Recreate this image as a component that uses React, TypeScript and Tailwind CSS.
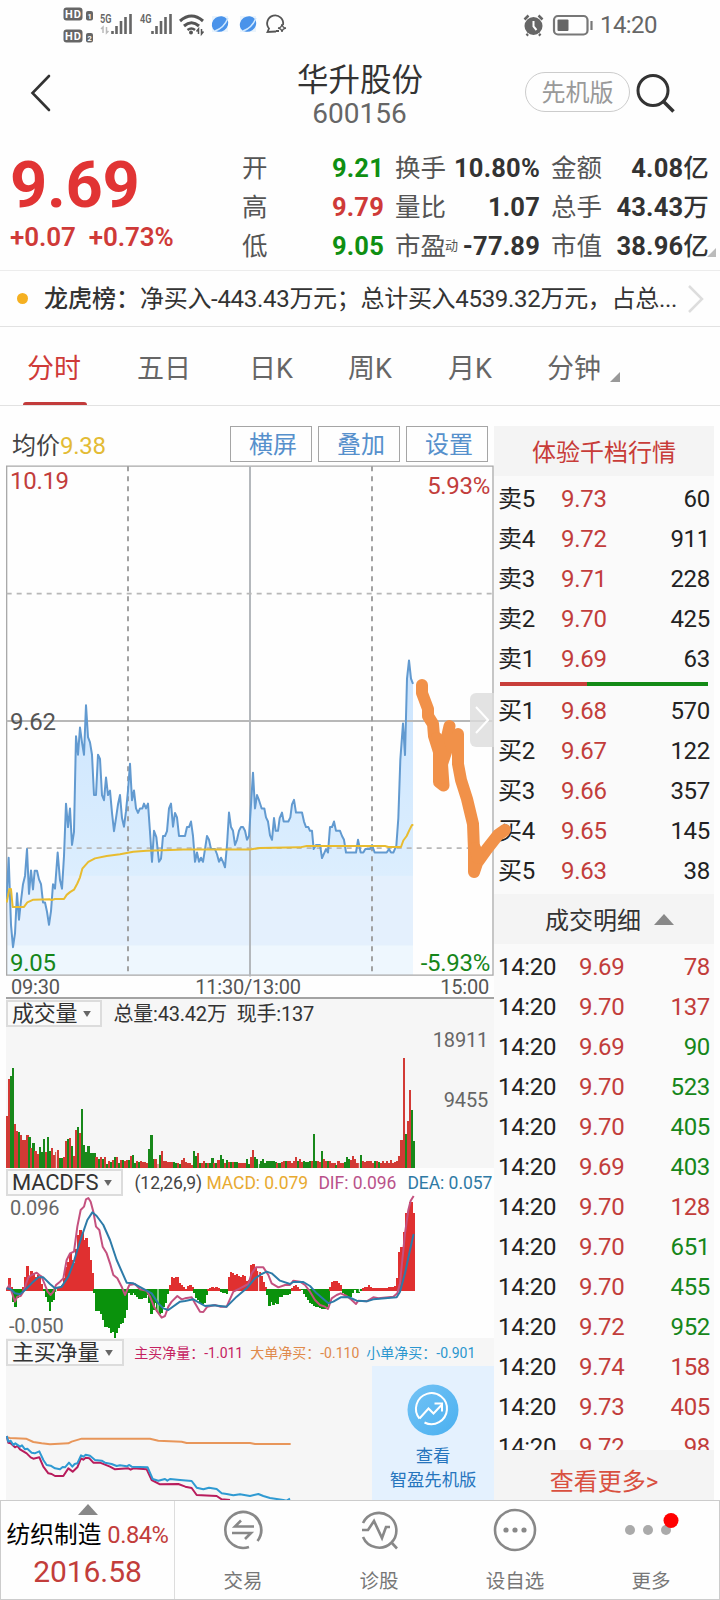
import type { ReactNode } from 'react'

const stats = [
  { label: '开', value: '9.21', color: 'text-[#0f8f12]' },
  { label: '换手', value: '10.80%', color: 'text-[#333]' },
  { label: '金额', value: '4.08亿', color: 'text-[#333]' },
  { label: '高', value: '9.79', color: 'text-[#cf3a38]' },
  { label: '量比', value: '1.07', color: 'text-[#333]' },
  { label: '总手', value: '43.43万', color: 'text-[#333]' },
  { label: '低', value: '9.05', color: 'text-[#0f8f12]' },
  { label: '市盈', note: '动', value: '-77.89', color: 'text-[#333]' },
  { label: '市值', value: '38.96亿', color: 'text-[#333]' },
]

const sells = [
  { name: '卖5', price: '9.73', amount: 60 },
  { name: '卖4', price: '9.72', amount: 911 },
  { name: '卖3', price: '9.71', amount: 228 },
  { name: '卖2', price: '9.70', amount: 425 },
  { name: '卖1', price: '9.69', amount: 63 },
]

const buys = [
  { name: '买1', price: '9.68', amount: 570 },
  { name: '买2', price: '9.67', amount: 122 },
  { name: '买3', price: '9.66', amount: 357 },
  { name: '买4', price: '9.65', amount: 145 },
  { name: '买5', price: '9.63', amount: 38 },
]

const trades = [
  { price: '9.69', amount: 78, up: true },
  { price: '9.70', amount: 137, up: true },
  { price: '9.69', amount: 90, up: false },
  { price: '9.70', amount: 523, up: false },
  { price: '9.70', amount: 405, up: false },
  { price: '9.69', amount: 403, up: false },
  { price: '9.70', amount: 128, up: true },
  { price: '9.70', amount: 651, up: false },
  { price: '9.70', amount: 455, up: false },
  { price: '9.72', amount: 952, up: false },
  { price: '9.74', amount: 158, up: true },
  { price: '9.73', amount: 405, up: true },
  { price: '9.72', amount: 98, up: true },
]

// chart units: x runs 18..1482 over the trading day, one minute is 6.1
const priceLine =
  '20,1275 26,1155 33,1350 39,1415 45,1375 51,1258 57,1335 63,1280 69,1232 75,1208 81,1130 87,1260 93,1192 99,1247 104,1193 111,1193 117,1218 123,1232 129,1285 135,1285 141,1312 147,1350 153,1310 159,1232 165,1245 173,1140 180,1220 186,1245 192,1150 198,998 204,1066 210,1012 216,1118 222,1080 228,802 234,856 240,777 246,820 252,856 258,712 264,805 270,820 276,856 282,973 288,973 294,856 300,868 306,973 312,988 318,922 324,973 330,960 336,1025 342,1078 348,1040 354,1000 360,973 366,1040 372,1065 378,1020 384,960 390,882 396,988 402,960 408,1012 414,1025 420,1012 427,1012 432,998 438,1012 444,998 450,1080 456,1167 462,1077 469,1095 477,1167 483,1158 489,1092 495,1092 501,1078 507,1012 513,998 519,1065 525,1025 531,1038 537,1092 555,1092 561,1066 567,1066 573,1050 579,1092 585,1167 591,1140 597,1167 603,1155 609,1167 615,1130 621,1092 627,1103 633,1130 645,1130 651,1145 657,1167 663,1155 669,1167 675,1183 681,1118 687,1024 693,1066 699,1077 705,1118 711,1103 717,1077 723,1066 729,1066 735,1077 741,1103 747,1092 753,1000 759,908 765,1012 771,973 777,988 785,1012 793,1012 798,1038 804,1050 810,1090 816,1103 822,1040 827,1077 834,1077 839,1040 846,1024 851,1050 865,1050 871,1038 876,1000 882,987 888,1024 906,1024 912,1050 918,1066 925,1066 930,1077 936,1077 941,1130 948,1118 960,1118 966,1156 978,1130 984,1140 990,1066 996,1066 1002,1050 1008,1077 1020,1077 1026,1092 1032,1103 1038,1140 1068,1140 1074,1103 1082,1140 1090,1140 1096,1130 1110,1130 1116,1118 1124,1140 1160,1140 1167,1130 1173,1140 1180,1140 1189,1120 1195,1040 1201,870 1209,765 1215,857 1221,635 1227,582 1233,635 1239,650'

const averageLine =
  '20,1285 28,1246 33,1246 38,1298 72,1298 82,1285 100,1277 150,1276 155,1278 165,1275 192,1275 200,1263 210,1255 222,1248 232,1230 240,1212 247,1187 265,1167 285,1157 320,1150 360,1145 400,1138 440,1135 510,1133 550,1131 750,1131 780,1127 900,1125 920,1121 1155,1121 1165,1124 1203,1124 1210,1105 1220,1092 1228,1075 1236,1060 1240,1060'

const difLine =
  '20,388 28,375 38,405 45,425 52,410 62,408 70,395 85,352 95,345 110,338 118,345 125,350 135,375 143,395 152,405 160,395 168,375 180,365 190,355 200,300 210,280 222,275 232,200 242,150 252,140 258,118 265,114 272,125 280,155 288,200 298,210 308,260 320,280 330,310 340,345 352,355 365,380 375,405 388,375 405,372 420,388 440,392 450,410 462,440 472,455 485,473 495,468 505,440 515,425 532,408 545,418 555,415 575,412 585,430 600,455 610,456 622,440 645,435 660,440 680,440 700,395 720,385 745,372 755,340 768,322 790,322 805,345 815,370 835,382 855,375 870,375 880,362 900,365 915,375 930,395 945,420 960,435 975,440 984,447 995,415 1010,405 1022,400 1040,408 1055,420 1068,432 1075,422 1100,424 1120,412 1135,415 1180,410 1192,400 1200,370 1215,220 1225,150 1232,122 1241,108'

const deaLine =
  '20,385 32,388 45,400 60,403 75,390 95,370 115,352 130,352 150,372 165,385 185,380 205,350 220,310 232,270 245,230 262,180 277,157 290,168 310,195 330,240 350,300 380,368 400,370 440,392 455,400 475,430 490,445 505,450 540,425 555,423 580,418 615,438 640,436 680,440 710,410 740,385 765,355 785,342 800,335 815,340 840,362 870,372 880,366 910,366 930,378 950,400 985,430 1000,425 1022,412 1045,411 1070,422 1100,424 1120,418 1190,412 1200,395 1215,340 1230,270 1241,222'

const bigOrderLine =
  '20,832 30,834 78,836 100,846 125,850 150,853 205,850 215,845 245,836 450,836 475,842 545,845 560,849 750,849 765,852 872,852'

const smallOrderLine =
  '20,828 25,845 32,842 40,855 46,850 60,860 66,856 75,868 82,866 95,878 104,880 118,874 130,900 140,915 152,917 165,925 180,928 188,921 195,922 207,908 217,920 224,912 232,910 243,886 250,890 257,884 270,887 285,900 305,902 315,908 335,912 350,918 360,916 380,919 388,915 395,920 443,922 458,957 475,962 495,957 502,962 510,957 540,960 575,963 590,983 610,988 627,983 650,987 665,1000 680,1002 700,1006 720,1003 750,1008 775,1002 790,1008 810,1014 850,1020 860,1022 870,1016'

const mainBuyLine =
  '20,828 25,848 32,850 45,862 52,858 60,868 80,880 92,892 100,896 118,892 130,920 145,940 155,942 165,948 190,948 205,925 218,935 232,922 243,895 250,899 257,893 268,895 280,908 300,908 330,920 345,928 385,925 392,929 400,925 440,928 455,960 480,973 535,972 556,980 575,984 590,1005 650,1008 665,1018 690,1020'

// negative entries are falling minutes
const volume = [
  155, 268, -277, -300, 132, 110, -108, 100, 83, 83, 99, -93, 60, -75, 52, 42, -63, -47, -88, 47, -93, -50, 60, 38, 48,
  54, -30, -30, 34, 80, -86, 90, -66, 36, 113, -122, 104, -178, -68, -48, -65, -46, -44, -46, 33, -28, 32, -28, 32, -12,
  20, -18, 24, -33, 33, -16, 25, -25, 20, 25, -25, 36, -38, -16, 22, -18, 20, 18, 18, 14, -58, -98, -26, 26, 12,
  -38, 52, 22, 20, 18, 18, 18, -18, -16, 15, -12, 25, 30, 18, 16, 16, 10, -50, -36, 45, -16, 16, 20, -14, 14,
  -16, -30, 14, -14, 25, -38, -28, 14, -24, 18, -18, 17, -18, -17, 15, 14, 14, 14, -26, -12, 32, 55, -34, -26, -12,
  -20, -26, -14, -22, -20, -22, -20, -17, 16, -14, 17, 20, -22, 22, 22, 15, 22, 34, -20, 28, 18, -22, -17, -18, -20,
  22, -103, -20, 22, 18, -52, 26, 20, -20, 22, 15, 14, -10, 22, 15, 14, -17, -34, -28, 24, 37, 26, 16, 14, -40,
  20, 19, 20, 22, 20, 16, -22, 22, -18, 15, 22, 16, 20, 15, 23, 14, 18, 20, 35, 85, 330, -103, 142, 235, -174, -82,
]

const macd = [
  5, 37, 10, -35, -50, -25, -12, -5, 10, 40, 73, 40, 57, 50, 40, 45, 35, 18, -3, -20, -37, -62, -37, -30, -5,
  5, 10, 15, 35, 70, 85, 112, 90, 80, 122, 165, 180, 170, 150, 155, 130, 90, 52, -10, -62, -62, -72, -90, -110, -112,
  -113, -130, -125, -146, -128, -115, -102, -100, -85, -60, -10, -15, -8, -15, -22, -28, -26, -25, -24, -14, -40, -72,
  -60, -40, -65, -72, -70, -52, -38, -12, 15, 40, 36, 40, 38, 22, 14, 8, 2, 12, 15, 10, -8, -25, -30, -38, -42, -38,
  -15, 4, 6, 8, 6, 8, 5, -5, -8, -10, -12, 40, 55, 52, 46, 48, 42, 40, 45, 42, 28, 30, 75, 78, 65, 58, 55,
  42, 25, 10, -14, -48, -36, -44, -40, -42, -22, -20, -16, -16, -14, -12, 6, 12, 15, 8, 3, 0, -12, -20, -30, -38,
  -42, -48, -50, -52, -54, -56, -58, -50, -40, 10, 24, 28, 28, 22, 14, -10, -18, -22, -22, -20, -10, 0, -8, -8, -4,
  5, 8, 10, 15, 10, 6, 5, 5, 5, 5, 6, 5, 5, 8, 8, 10, 12, 35, 115, 130, 175, 230, 235, 265, 265, 232,
]

function Plot({ points, stroke, width = 2 }: { points: string; stroke: string; width?: number }) {
  return (
    <polyline
      points={points}
      fill="none"
      stroke={stroke}
      strokeWidth={width}
      strokeLinejoin="round"
      vectorEffect="non-scaling-stroke"
    />
  )
}

function Picker({ children }: { children: ReactNode }) {
  return (
    <div className="flex h-[27px] items-center gap-[6px] border-2 border-[#dcdcdc] bg-[#fafafa] pr-[9px] pl-[4px] text-[22px] leading-none tracking-[-0.2px] text-[#333]">
      {children}
      <svg className="h-[6px] w-[8px] shrink-0" viewBox="0 0 9 7">
        <path d="M0 0h9L4.500 7z" fill="#666" />
      </svg>
    </div>
  )
}

function StatusBar() {
  return (
    <div className="flex h-[50px] items-center justify-between pr-[63px] pl-[63px]">
      <svg className="h-[50px] w-[230px]" viewBox="63 0 230 50">
        {[7, 29].map((y, i) => (
          <g key={y}>
            <rect x="63.500" y={y + 0.5} width="19" height="13" rx="3" fill="#666" />
            <text x="65" y={y + 11} fontSize="11" fontWeight="700" fill="#fff" textLength="16" fontFamily="Roboto">HD</text>
            <rect x="86" y={y + 4} width="7" height="9.500" rx="2" fill="#666" />
            <text x="87.500" y={y + 11.500} fontSize="7.500" fontWeight="700" fill="#fff" fontFamily="Roboto">{i + 1}</text>
          </g>
        ))}
        <text x="100" y="23" fontSize="13" fontWeight="600" fill="#666" textLength="11.500" lengthAdjust="spacingAndGlyphs" fontFamily="Roboto">5G</text>
        <text x="140" y="23" fontSize="13" fontWeight="600" fill="#666" textLength="11.500" lengthAdjust="spacingAndGlyphs" fontFamily="Roboto">4G</text>
        <path d="M103 33v-6l-2 2M106.500 27v6l2-2" stroke="#bbb" strokeWidth="1.500" fill="none" />
        {[111, 151].map((x) => (
          <path key={x} d={`M${x + 1.500} 34v-3M${x + 5.500} 34v-8M${x + 10} 34V21M${x + 14.500} 34V17M${x + 19.500} 34V14`} stroke="#666" strokeWidth="2.600" />
        ))}
        <g fill="none" stroke="#555" strokeWidth="3">
          <path d="M180 21q11.500-10 23 0" />
          <path d="M184 26q7.500-6.500 15 0" />
          <path d="M187.500 30q4-3 7.500 0" strokeWidth="2.500" />
        </g>
        <circle cx="191" cy="32.500" r="2" fill="#555" />
        <path d="M198.500 34v-5l-2 2.500M201.500 29v5l2-2.500" stroke="#555" strokeWidth="1.500" fill="none" />
        {[220, 248].map((x) => (
          <g key={x}>
            <rect x={x - 8} y="16" width="16" height="16" fill="#eaf4fd" />
            <ellipse cx={x} cy="24" rx="8.500" ry="7.500" fill="#4a93ea" transform={`rotate(-35 ${x} 24)`} />
            <path d={`M${x - 5} 31q9-3 13-13`} stroke="#cfe8ff" strokeWidth="1.500" fill="none" />
          </g>
        ))}
        <path d="M276 31.500l-8.500.500 1.500-3.500a8 8 0 1 1 14-3.500M279 31h-3" stroke="#555" strokeWidth="1.800" fill="none" />
        <path d="M282 24q.500 4 4 4-3.500.500-4 4-.500-3.500-4-4 3.500 0 4-4z" stroke="#555" strokeWidth="1.300" fill="#fff" />
      </svg>
      <div className="flex items-center gap-[7px]">
        <svg className="h-[26px] w-[70px]" viewBox="523 11 70 26">
          <circle cx="533.500" cy="25" r="9" fill="#666" />
          <path d="M533.500 20v5.500l3 3.500" stroke="#fff" strokeWidth="2" fill="none" />
          <path d="M524.500 18.500l4-4M542.500 18.500l-4-4M528 33l-1.500 1.500M539 33l1.500 1.500" stroke="#666" strokeWidth="2.500" />
          <rect x="554" y="15" width="33.500" height="18.500" rx="4" fill="none" stroke="#777" strokeWidth="2.200" />
          <rect x="557.500" y="18.500" width="11" height="11.500" rx="1" fill="#666" />
          <path d="M591.500 20v9" stroke="#777" strokeWidth="2.200" />
        </svg>
        <span className="w-[57px] text-[24px] leading-none tracking-[-0.6px] text-[#666]">14:20</span>
      </div>
    </div>
  )
}

function Header() {
  return (
    <div className="grid h-[91px] grid-cols-3">
      <div className="pt-[24px] pl-[29px]">
        <svg className="h-[38px] w-[24px]" viewBox="0 0 24 38" fill="none" stroke="#333" strokeWidth="2.600">
          <path d="M20 2L3.500 19 20 36" strokeLinecap="round" />
        </svg>
      </div>
      <div className="flex flex-col items-center pt-[14px]">
        <div className="text-[31.500px] leading-[34px] text-[#333]">华升股份</div>
        <div className="pr-px text-[28px] leading-[32px] text-[#666]">600156</div>
      </div>
      <div className="flex items-start gap-[6px] pt-[22px] pl-[45px]">
        <div className="flex h-[40px] w-[105px] items-center justify-center rounded-full border border-[#ccc] pt-[2px] text-[24px] leading-none text-[#999]">
          先机版
        </div>
        <svg className="h-[42px] w-[40px]" viewBox="0 0 40 42" fill="none" stroke="#333" strokeWidth="3">
          <circle cx="17" cy="18.500" r="15" />
          <path d="M27.500 29.500l10 10" strokeWidth="3.500" />
        </svg>
      </div>
    </div>
  )
}

function Quote() {
  return (
    <div className="relative flex h-[130px] border-b border-[#ececec] pr-[11px] pl-[10px]">
      <div className="w-[232px]">
        <div className="pt-[11px] text-[65px] leading-[66px] font-bold tracking-[-0.3px] text-[#e13434]">9.69</div>
        <div className="flex gap-[13px] pt-[6px] text-[26px] leading-[26px] font-semibold tracking-[-0.1px] text-[#cf3a38]">
          <span>+0.07</span>
          <span>+0.73%</span>
        </div>
      </div>
      <div className="grid flex-1 auto-rows-[39px] grid-cols-[142px_145px_158px] gap-x-[11px] pt-[8px]">
        {stats.map((s) => (
          <div key={s.label} className="flex items-center justify-between whitespace-nowrap">
            <span className="flex items-center text-[25.500px] leading-none text-[#555]">
              {s.label}
              {s.note && <span className="-mr-3 -ml-px pb-[3px] text-[13px]">{s.note}</span>}
            </span>
            <span className={`text-[25.500px] leading-none font-bold tracking-[0.2px] ${s.color}`}>
              {s.value.replace(/[亿万]/, '')}
              <span className="font-medium">{s.value.match(/[亿万]/)?.[0]}</span>
            </span>
          </div>
        ))}
      </div>
      <svg className="absolute right-[4px] bottom-[13px] size-[9px]" viewBox="0 0 10 10">
        <path d="M10 0v10H0z" fill="#bbb" />
      </svg>
    </div>
  )
}

function Tabs() {
  return (
    <div className="flex h-[79px] items-center border-b border-[#e2e2e2] text-[27px] leading-none text-[#666]">
      <div className="relative flex h-full w-[110px] items-center pt-[6px] pl-[27px] text-[#cf3a38]">
        分时
        <div className="absolute bottom-0 left-[23px] h-[3px] w-[64px] rounded-t bg-[#c23b3b]" />
      </div>
      <div className="w-[139px] pt-[6px] pl-[27px]">五日</div>
      <div className="w-[99px] pt-[6px]">日K</div>
      <div className="w-[100px] pt-[6px]">周K</div>
      <div className="w-[99px] pt-[6px]">月K</div>
      <div className="flex items-end gap-[9px] pt-[6px]">
        <span>分钟</span>
        <svg className="mb-px size-[10px]" viewBox="0 0 10 10">
          <path d="M10 0v10H0z" fill="#999" />
        </svg>
      </div>
    </div>
  )
}

function PriceChart() {
  return (
    <div className="relative h-[512px]">
      <svg className="h-[512px] w-[488px]" viewBox="18 14.500 1464 1487" preserveAspectRatio="none">
        <defs>
          <clipPath id="under-price">
            <polygon points={`18,1496 ${priceLine} 1239,1496`} />
          </clipPath>
          <linearGradient id="sky" x1="0" y1="0" x2="0" y2="1">
            <stop offset="0" stopColor="#cbe4fe" />
            <stop offset="1" stopColor="#dceefe" />
          </linearGradient>
        </defs>
        <g clipPath="url(#under-price)">
          <rect x="18" y="580" width="1230" height="630" fill="url(#sky)" />
          <rect x="18" y="1208" width="1230" height="204" fill="#e4f0fd" />
          <rect x="18" y="1410" width="1230" height="90" fill="#eef7fe" />
        </g>
        <g fill="none" stroke="#a8a8a8" strokeWidth="1.300">
          <path d="M20 18H1479V1496H20Z" vectorEffect="non-scaling-stroke" />
          <path d="M20 758H1480" stroke="#b8b8b8" strokeWidth="2" vectorEffect="non-scaling-stroke" />
          <path d="M750 18V1500" stroke="#b4b8bc" strokeWidth="2" vectorEffect="non-scaling-stroke" />
          <path d="M20 388H1480M20 1127H1480" stroke="#b8b8b8" strokeWidth="1.800" strokeDasharray="5 5" vectorEffect="non-scaling-stroke" />
          <path d="M384 18V1490M1116 18V1490" stroke="#999" strokeWidth="1.800" strokeDasharray="5 5" vectorEffect="non-scaling-stroke" />
        </g>
        <Plot points={priceLine} stroke="#629ad0" />
        <Plot points={averageLine} stroke="#e8bc30" />
      </svg>
      <div className="absolute inset-0 text-[24px] leading-[24px] tracking-[-0.3px]">
        <span className="absolute top-[4px] left-[4px] text-[#c23d3b]">10.19</span>
        <span className="absolute top-[9px] right-[4px] text-[#c23d3b]">5.93%</span>
        <span className="absolute top-[245px] left-[4px] text-[#555]">9.62</span>
        <span className="absolute bottom-[2px] left-[4px] text-[#16861a]">9.05</span>
        <span className="absolute right-[4px] bottom-[2px] text-[#16861a]">-5.93%</span>
      </div>
      <div className="absolute top-[228px] right-0 flex h-[54px] w-[24px] items-center rounded-l-md bg-[#dcdcdc]/80 pl-[5px]">
        <svg className="h-[28px] w-[14px]" viewBox="0 0 14 28" fill="none" stroke="#fff" strokeWidth="2">
          <path d="M1 1l12 13L1 27" />
        </svg>
      </div>
    </div>
  )
}

function Charts() {
  return (
    <div className="w-[494px] pl-[6px]">
      <div className="flex h-[59px] items-start pt-[20px]">
        <div className="w-[224px] pt-[8px] pl-[6px] text-[24px] leading-[24px] text-[#444]">
          均价<span className="tracking-[-0.3px] text-[#e3bb35]">9.38</span>
        </div>
        <div className="flex gap-[6px]">
          {['横屏', '叠加', '设置'].map((b) => (
            <div key={b} className="flex h-[36px] w-[82px] items-center justify-center border border-[#a5a5a5] pt-px pl-[4px] text-[24px] leading-none text-[#5690cc]">
              {b}
            </div>
          ))}
        </div>
      </div>

      <PriceChart />

      <div className="flex h-[22px] items-center justify-between border-b-2 border-[#a3a3a3] pr-[5px] pl-[5px] text-[20px] leading-none tracking-[-0.2px] text-[#555]">
        <span>09:30</span>
        <span className="pr-[4px]">11:30/13:00</span>
        <span>15:00</span>
      </div>

      {/* Volume */}
      <div className="relative h-[169px] bg-[#f6f6f6]">
        <div className="flex items-center pt-px">
          <Picker>成交量</Picker>
          <div className="flex gap-[10px] pt-px pl-[11px] text-[20px] leading-none tracking-[-0.2px] text-[#333]">
            <span>总量:43.42万</span>
            <span>现手:137</span>
          </div>
        </div>
        <div className="absolute top-[31px] right-[6px] flex flex-col items-end gap-[40px] text-[20px] leading-[20px] tracking-[-0.2px] text-[#666]">
          <span>18911</span>
          <span>9455</span>
        </div>
        <svg className="absolute bottom-0 left-0 h-[115px] w-[488px]" viewBox="18 250 1464 345" preserveAspectRatio="none">
          {volume.map((v, i) => (
            <rect
              key={i}
              x={18 + i * 6.1}
              y={595 - Math.abs(v)}
              width="6.500"
              height={Math.abs(v)}
              fill={v > 0 ? '#d23a35' : '#18881a'}
              shapeRendering="crispEdges"
            />
          ))}
          <path d="M169 530V595M474 530V595M776 530V595M1078 530V595" stroke="#f6f6f6" strokeWidth="3" />
        </svg>
      </div>

      {/* MACD */}
      <div className="relative h-[170px]">
        <svg className="absolute top-0 left-0 h-[170px] w-[488px]" viewBox="18 24 1464 510" preserveAspectRatio="none">
          {macd.map((v, i) => (
            <rect
              key={i}
              x={18 + i * 6.1}
              y={v > 0 ? 390 - v : 388}
              width="7.500"
              height={Math.abs(v) + 2}
              fill={v > 0 ? '#e03030' : '#0a920c'}
              shapeRendering="crispEdges"
            />
          ))}
          <path d="M169 380V396M474 386V470M776 310V396M1078 380V396" stroke="#fff" strokeWidth="3" />
          <Plot points={difLine} stroke="#c4517f" />
          <Plot points={deaLine} stroke="#2d7ba8" />
        </svg>
        <div className="relative flex items-center pt-px">
          <Picker>MACDFS</Picker>
          <div className="flex pt-[3px] pl-[11px] text-[17.500px] leading-none tracking-[-0.05px] whitespace-nowrap">
            <span className="w-[72px] text-[#444]">(12,26,9)</span>
            <span className="w-[112px] text-[#e8aa30]">MACD: 0.079</span>
            <span className="w-[89px] text-[#b9528a]">DIF: 0.096</span>
            <span className="text-[#2f7aa5]">DEA: 0.057</span>
          </div>
        </div>
        <span className="absolute top-[30px] left-[4px] text-[20px] leading-[20px] tracking-[-0.2px] text-[#666]">0.096</span>
        <span className="absolute bottom-[2px] left-[3px] text-[20px] leading-[20px] tracking-[-0.2px] text-[#666]">-0.050</span>
      </div>

      {/* Net buying */}
      <div className="relative h-[162px] bg-[#f6f6f6]">
        <svg className="absolute top-0 left-0 h-[162px] w-[488px]" viewBox="18 534 1464 486" preserveAspectRatio="none">
          <Plot points={bigOrderLine} stroke="#e8965a" />
          <Plot points={mainBuyLine} stroke="#b81c5c" />
          <Plot points={smallOrderLine} stroke="#2f9ad2" />
        </svg>
        <div className="relative flex items-center pt-px">
          <Picker>主买净量</Picker>
          <div className="flex gap-[7px] pt-px pl-[10px] text-[14px] leading-none whitespace-nowrap">
            <span className="text-[#c52160]">主买净量：-1.011</span>
            <span className="text-[#e0894a]">大单净买：-0.110</span>
            <span className="text-[#2b96cf]">小单净买：-0.901</span>
          </div>
        </div>
        <div className="absolute top-[28px] right-0 flex h-[134px] w-[122px] flex-col items-center bg-[#e4f1fe] pt-[18px] text-[17.300px] leading-[24px] text-[#2675bd]">
          <svg className="mb-[8px] size-[52px]" viewBox="0 0 52 52" fill="none" stroke="#fff" strokeWidth="2">
            <defs>
              <linearGradient id="badge" x1="0" y1="0" x2="1" y2="1">
                <stop offset="0" stopColor="#74c3f5" />
                <stop offset="1" stopColor="#4ab0f0" />
              </linearGradient>
            </defs>
            <circle cx="26" cy="26" r="25.500" fill="url(#badge)" stroke="none" />
            <path d="M12.500 34.500A15.500 15.500 0 1 1 17.500 38.500" />
            <path d="M12.500 34.500l9-10 5 5 8.500-9" />
            <path d="M27.500 19.500h7.500v8" />
          </svg>
          <span>查看</span>
          <span>智盈先机版</span>
        </div>
      </div>
    </div>
  )
}

function Level({ name, price, amount }: { name: string; price: string; amount: number }) {
  return (
    <div className="flex h-[40px] items-center pr-[4px] pl-[4px] text-[24px] leading-none tracking-[-0.3px] text-[#222]">
      <span className="w-[63px]">{name}</span>
      <span className="flex-1 text-[#c23d3b]">{price}</span>
      <span>{amount}</span>
    </div>
  )
}

function OrderBook() {
  return (
    <div className="mt-[20px] flex h-[1074px] w-[220px] flex-col bg-[#fafafa]">
      <div className="flex h-[50px] shrink-0 items-center justify-center bg-[#f4f4f4] pt-[3px] text-[24px] leading-none text-[#c83c38]">体验千档行情</div>
      <div className="h-[206px] shrink-0 pt-[3px]">
        {sells.map((s) => (
          <Level key={s.name} {...s} />
        ))}
      </div>
      <div className="mx-[6px] flex h-[4px] shrink-0">
        <div className="w-[87px] bg-[#c83e3a]" />
        <div className="flex-1 bg-[#138a16]" />
      </div>
      <div className="h-[208px] shrink-0 pt-[5px]">
        {buys.map((b) => (
          <Level key={b.name} {...b} />
        ))}
      </div>
      <div className="flex h-[50px] shrink-0 items-center justify-center gap-[13px] bg-[#f4f4f4] pt-[3px] pl-[11px] text-[24px] leading-none text-[#333]">
        成交明细
        <svg className="mb-[3px] h-[11px] w-[20px]" viewBox="0 0 20 11">
          <path d="M0 11L10 0l10 11z" fill="#888" />
        </svg>
      </div>
      <div className="h-[506px] shrink-0 overflow-hidden pt-[3px]">
        {trades.map((t, i) => (
          <div key={i} className="flex h-[40px] items-center pr-[4px] pl-[4px] text-[24px] leading-none tracking-[-0.35px]">
            <span className="w-[81px] text-[#222]">14:20</span>
            <span className="flex-1 text-[#c23d3b]">{t.price}</span>
            <span className={t.up ? 'text-[#c23d3b]' : 'text-[#16861a]'}>{t.amount}</span>
          </div>
        ))}
      </div>
      <div className="flex flex-1 items-center justify-center bg-[#f4f4f4] pt-[13px] text-[24px] leading-none text-[#d9503f]">查看更多&gt;</div>
    </div>
  )
}

function NavItem({ label, children }: { label: string; children: ReactNode }) {
  return (
    <div className="flex w-[136px] flex-col items-center pt-[6px] text-[19.500px] leading-[20px] text-[#777]">
      <svg className="mb-[19px] h-[46px] w-[60px]" viewBox="-30 -23 60 46" fill="none" stroke="#888" strokeWidth="2.600">
        {children}
      </svg>
      {label}
    </div>
  )
}

function BottomBar() {
  return (
    <div className="flex h-[100px] border border-[#ccc]">
      <div className="flex w-[174px] flex-col items-center border-r border-[#ddd] pt-[3px]">
        <svg className="h-[11px] w-[20px]" viewBox="0 0 20 11">
          <path d="M0 11L10 0l10 11z" fill="#888" />
        </svg>
        <div className="flex gap-[6px] pt-[8px] text-[23.700px] leading-[24px] whitespace-nowrap text-black">
          纺织制造<span className="tracking-[-0.5px] text-[#c23d3b]">0.84%</span>
        </div>
        <div className="pt-[10px] text-[30px] leading-[30px] tracking-[-0.1px] text-[#c23d3b]">2016.58</div>
      </div>
      <NavItem label="交易">
        <path d="M14.500 11A18 18 0 1 0 6 17M14.500 11A18 18 0 0 0 12 -13.500" />
        <path d="M11 -3.500H-8L-2 -9.500M-11 3H8L2 9" />
      </NavItem>
      <NavItem label="诊股">
        <path d="M-16 -7A17.500 17.500 0 1 1 12.500 12.500M-16 7A17.500 17.500 0 0 0 12.500 12.500L18 18.500" />
        <path d="M-17 0H-11L-5 -9 3 8 7 -3H11" />
      </NavItem>
      <NavItem label="设自选">
        <circle r="20" />
        <g fill="#888" stroke="none">
          <circle cx="-9" r="2.600" />
          <circle r="2.600" />
          <circle cx="9" r="2.600" />
        </g>
      </NavItem>
      <NavItem label="更多">
        <g fill="#aaa" stroke="none">
          <circle cx="-21" r="5" />
          <circle cx="-3" r="5" />
          <circle cx="15" r="5" />
          <circle cx="20" cy="-9.500" r="7.500" fill="#f00" />
        </g>
      </NavItem>
    </div>
  )
}

export default function App() {
  return (
    <div className="relative h-[1600px] w-[720px] overflow-hidden bg-[#fefefe] font-['Roboto','Noto_Sans_CJK_SC',sans-serif]">
      <StatusBar />
      <Header />
      <Quote />
      <div className="flex h-[56px] items-center border-b border-[#e2e2e2] pl-[17px] text-[24px] leading-none whitespace-nowrap text-[#333]">
        <span className="mr-[16px] size-[11px] rounded-full bg-[#f5b021]" />
        <span className="font-medium">龙虎榜：</span>
        <span className="w-[548px] tracking-[-0.3px]">净买入-443.43万元；总计买入4539.32万元，占总...</span>
        <svg className="h-[28px] w-[16px]" viewBox="0 0 16 28" fill="none" stroke="#ddd" strokeWidth="2.500">
          <path d="M1 1l13 13L1 27" />
        </svg>
      </div>
      <Tabs />
      <div className="flex">
        <Charts />
        <OrderBook />
      </div>
      <BottomBar />

      {/* Hand drawn forecast over the chart and the order book */}
      <svg className="absolute top-[670px] left-[410px] h-[215px] w-[110px]" viewBox="410 670 110 215" fill="none" stroke="#f19149" strokeWidth="12" strokeLinecap="round" strokeLinejoin="round">
        <path d="M422 685V693L428 709V716L433 724 434 736 439 752V782L443.500 785.500 442 764 446 752 447 737 449.500 726" />
        <path d="M437 738L441 752V778" />
        <path d="M458 734V764L461 780 467 799 473 824 474 850V872L477 863 487 849 498 835 505 830" />
        <path d="M475 848L478 858" />
      </svg>
    </div>
  )
}
